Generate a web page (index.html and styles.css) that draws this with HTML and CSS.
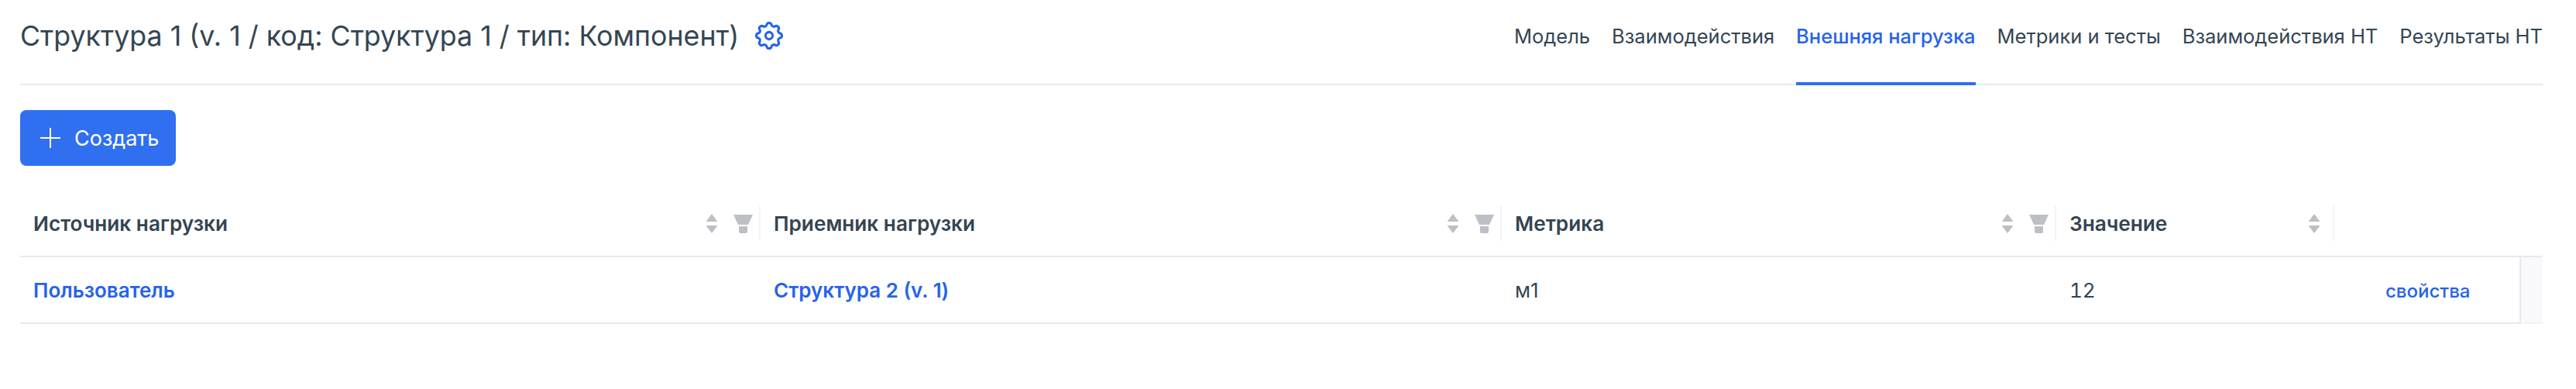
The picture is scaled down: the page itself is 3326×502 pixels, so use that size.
FILE: index.html
```html
<!DOCTYPE html>
<html>
  <head>
    <meta charset="UTF-8" />
    <title>Внешняя нагрузка</title>
    <link rel="stylesheet" href="styles.css">
  </head>
  <body>
    <div class="page">
      <header class="top">
        <div class="title-group">
          <h1>Структура 1 (v. 1 / код: Структура 1 / тип: Компонент)</h1>
          <svg class="gear" viewBox="0 0 24 24" fill="none" stroke="currentColor" stroke-width="1.7" stroke-linecap="round" stroke-linejoin="round">
            <path d="M10.325 4.317c.426-1.756 2.924-1.756 3.35 0a1.724 1.724 0 002.573 1.066c1.543-.94 3.31.826 2.37 2.37a1.724 1.724 0 001.065 2.572c1.756.426 1.756 2.924 0 3.35a1.724 1.724 0 00-1.066 2.573c.94 1.543-.826 3.31-2.37 2.37a1.724 1.724 0 00-2.572 1.065c-.426 1.756-2.924 1.756-3.35 0a1.724 1.724 0 00-2.573-1.066c-1.543.94-3.31-.826-2.37-2.37a1.724 1.724 0 00-1.065-2.572c-1.756-.426-1.756-2.924 0-3.35a1.724 1.724 0 001.066-2.573c-.94-1.543.826-3.31 2.37-2.37.996.608 2.296.07 2.572-1.065z" />
            <circle cx="12" cy="12" r="2.5" />
          </svg>
        </div>
        <nav class="tabs">
          <a class="tab" href="#">Модель</a>
          <a class="tab" href="#">Взаимодействия</a>
          <a class="tab active" href="#">Внешняя нагрузка</a>
          <a class="tab" href="#">Метрики и тесты</a>
          <a class="tab" href="#">Взаимодействия НТ</a>
          <a class="tab" href="#">Результаты НТ</a>
        </nav>
      </header>

      <button class="create-btn">
        <svg class="plus" viewBox="0 0 26 26" fill="none" stroke="currentColor" stroke-width="2">
          <path d="M13 0v26M0 13h26" />
        </svg>
        Создать
      </button>

      <table class="grid">
        <colgroup>
          <col class="col-source" />
          <col class="col-target" />
          <col class="col-metric" />
          <col class="col-value" />
          <col class="col-actions" />
          <col class="col-scroll" />
        </colgroup>
        <thead>
          <tr>
            <th>
              <div class="th-inner">
                <span class="th-label">Источник нагрузки</span>
                <svg class="sort" viewBox="0 0 16 25"><path d="M8 0l7.5 10H.5zM8 25L.5 15h15z" /></svg>
                <svg class="filter" viewBox="0 0 25 24"><path d="M0 0h25l-6 13v0H6zM7 15h11v7a2 2 0 0 1-2 2H9a2 2 0 0 1-2-2z" /></svg>
              </div>
            </th>
            <th>
              <div class="th-inner">
                <span class="th-label">Приемник нагрузки</span>
                <svg class="sort" viewBox="0 0 16 25"><path d="M8 0l7.5 10H.5zM8 25L.5 15h15z" /></svg>
                <svg class="filter" viewBox="0 0 25 24"><path d="M0 0h25l-6 13v0H6zM7 15h11v7a2 2 0 0 1-2 2H9a2 2 0 0 1-2-2z" /></svg>
              </div>
            </th>
            <th>
              <div class="th-inner">
                <span class="th-label">Метрика</span>
                <svg class="sort" viewBox="0 0 16 25"><path d="M8 0l7.5 10H.5zM8 25L.5 15h15z" /></svg>
                <svg class="filter" viewBox="0 0 25 24"><path d="M0 0h25l-6 13v0H6zM7 15h11v7a2 2 0 0 1-2 2H9a2 2 0 0 1-2-2z" /></svg>
              </div>
            </th>
            <th>
              <div class="th-inner th-no-filter">
                <span class="th-label">Значение</span>
                <svg class="sort" viewBox="0 0 16 25"><path d="M8 0l7.5 10H.5zM8 25L.5 15h15z" /></svg>
              </div>
            </th>
            <th colspan="2"></th>
          </tr>
        </thead>
        <tbody>
          <tr>
            <td><a class="row-link" href="#">Пользователь</a></td>
            <td><a class="row-link" href="#">Структура 2 (v. 1)</a></td>
            <td>м1</td>
            <td class="num">12</td>
            <td class="actions"><a class="action-link" href="#">свойства</a></td>
            <td class="scroll-cell"></td>
          </tr>
        </tbody>
      </table>
    </div>
  </body>
</html>
```

FILE: styles.css
```css
body {
  margin: 0;
  background-color: white;
  color: #344552;
  font-family: Inter, "Noto Sans", sans-serif;
}

.page {
  width: 3257px;
  margin-left: 26px;
}

.top {
  display: flex;
  justify-content: space-between;
  height: 108px;
  border-bottom: 2px solid #e5e9f2;
}

.title-group {
  display: flex;
  align-items: center;
  gap: 17px;
  height: 92px;
}

h1 {
  margin: 0;
  font-size: 35.75px;
  font-weight: 400;
  line-height: 44px;
}

.gear {
  width: 44px;
  height: 44px;
  color: #2563eb;
}

.tabs {
  display: flex;
  gap: 28px;
  height: 110px;
}

.tab {
  display: block;
  box-sizing: border-box;
  height: 110px;
  padding-top: 30px;
  border-bottom: 4px solid transparent;
  font-size: 25.5px;
  line-height: 34px;
  color: #344552;
  text-decoration: none;
}

.tab.active {
  color: #2563eb;
  font-weight: 500;
  border-bottom-color: #3070f0;
}

.create-btn {
  display: flex;
  align-items: center;
  gap: 18px;
  width: 201px;
  height: 72px;
  margin-top: 32px;
  padding: 0 0 0 26px;
  border: 0;
  border-radius: 8px;
  background-color: #3070f0;
  color: white;
  font-family: inherit;
  font-size: 27px;
  cursor: pointer;
}

.plus {
  width: 26px;
  height: 26px;
}

.grid {
  width: 100%;
  margin-top: 29px;
  border-collapse: collapse;
  table-layout: fixed;
}

.col-source { width: 956px; }
.col-target { width: 957px; }
.col-metric { width: 716px; }
.col-value { width: 359px; }
.col-actions { width: 240px; }
.col-scroll { width: 29px; }

th {
  height: 83px;
  padding: 4px 0 0;
  text-align: left;
}

.th-inner {
  display: flex;
  align-items: center;
  box-sizing: border-box;
  height: 45px;
  padding: 0 8px 0 17px;
  border-right: 2px solid #f1f3f6;
}

.th-label {
  flex: 1;
  font-size: 26.2px;
  font-weight: 600;
  color: #344552;
}

.sort {
  width: 16px;
  height: 25px;
  margin-right: 20px;
  fill: #bcc0c6;
}

.filter {
  width: 25px;
  height: 24px;
  fill: #bcc0c6;
}

.th-no-filter {
  padding-right: 0;
}

.th-no-filter .sort {
  margin-right: 16px;
}

td {
  height: 84px;
  padding: 0 0 0 17px;
  border-top: 2px solid #e5e9f2;
  border-bottom: 2px solid #e5e9f2;
  font-size: 26px;
}

.num {
  font-variant-numeric: tabular-nums;
}

.row-link {
  font-weight: 600;
  color: #2563eb;
  text-decoration: none;
}

.action-link {
  margin-left: 49px;
  font-size: 24px;
  font-weight: 500;
  color: #2563eb;
  text-decoration: none;
}

.scroll-cell {
  padding: 0;
  border-left: 2px solid #e5e9f2;
  border-bottom-color: #f1f3f6;
  background-color: #f9f9fb;
}
```
